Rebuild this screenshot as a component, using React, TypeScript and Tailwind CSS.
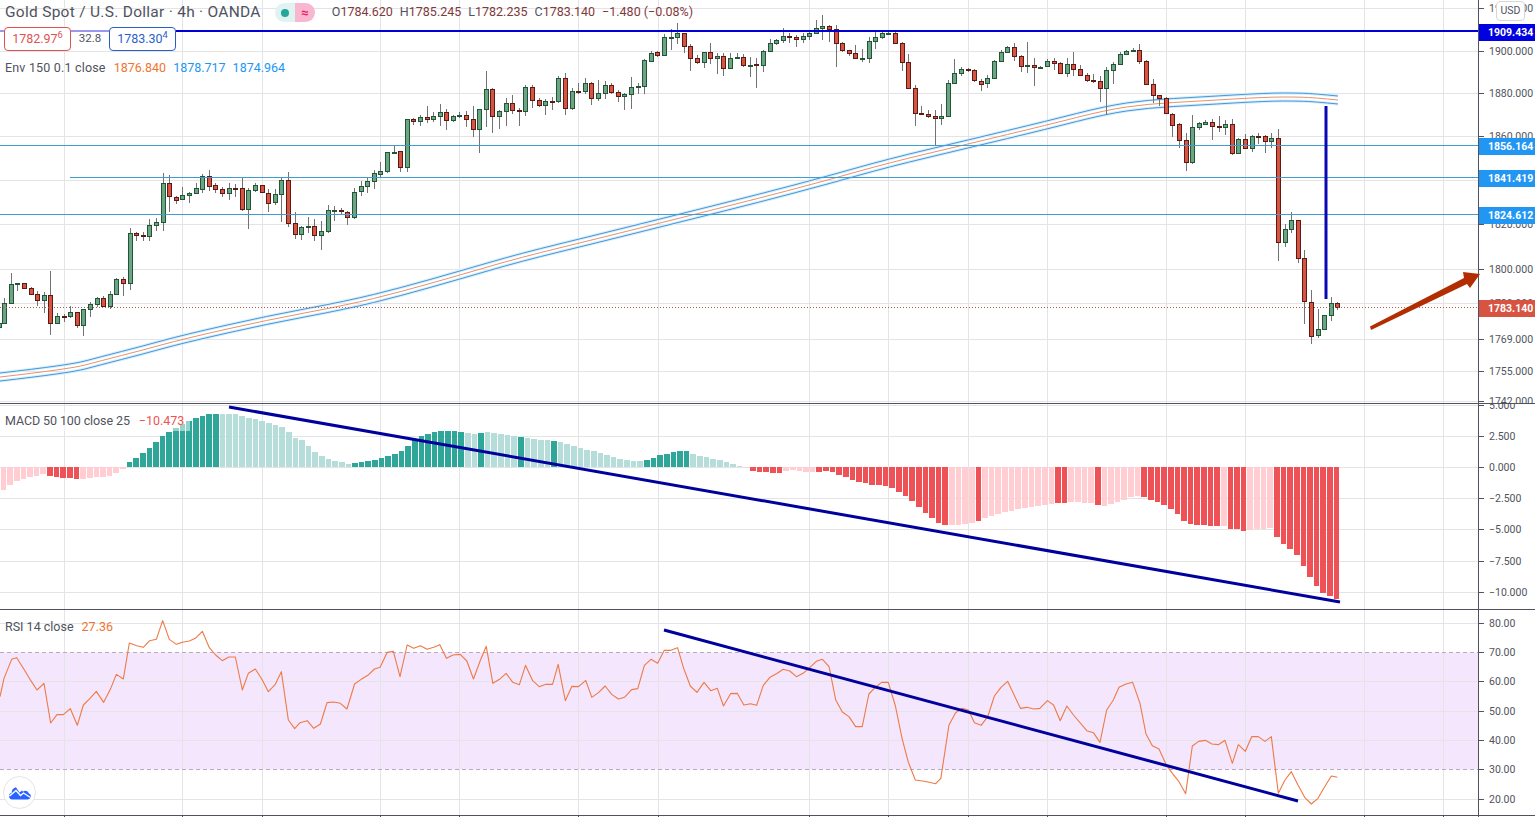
type Row = number[];

// candle rows are [x, wickTop, bodyTop, bodyBottom, wickBottom, up] read off 3x crops
const crop = (ox: number, oy: number, rows: Row[]) =>
  rows.map(([x, wt, bt, bb, wb, up]) => ({
    x: ox + x / 3,
    wt: oy + wt / 3,
    bt: oy + bt / 3,
    bb: oy + bb / 3,
    wb: oy + wb / 3,
    up: up === 1,
  }));

const candles = [
  ...crop(0, 170, [
    [-2, 455, 460, 472, 480, 1], [13, 385, 400, 460, 462, 1], [34, 310, 343, 400, 402, 1], [52, 338, 340, 344, 362, 1],
    [73, 338, 340, 356, 358, 0], [94, 352, 355, 373, 375, 0], [112, 362, 373, 392, 408, 0], [133, 365, 376, 392, 428, 1],
    [151, 303, 376, 460, 494, 0], [172, 430, 439, 460, 462, 1], [193, 432, 438, 440, 455, 0], [211, 408, 427, 439, 445, 1],
    [232, 425, 427, 467, 473, 0], [250, 418, 418, 467, 497, 1], [271, 395, 403, 418, 440, 1], [292, 380, 385, 403, 410, 1],
    [310, 378, 385, 410, 412, 0], [331, 363, 373, 410, 418, 1], [349, 325, 328, 373, 375, 1], [370, 320, 328, 341, 378, 0],
    [391, 175, 190, 341, 360, 1], [409, 186, 190, 197, 212, 0], [430, 185, 195, 199, 212, 0], [448, 148, 166, 199, 212, 1],
    [469, 145, 157, 166, 182, 1], [490, 10, 40, 157, 182, 1], [508, 15, 40, 80, 125, 0], [529, 78, 80, 88, 102, 0],
    [547, 52, 76, 88, 90, 1], [568, 66, 70, 76, 98, 1], [589, 38, 55, 70, 72, 1], [607, 13, 17, 55, 68, 1],
    [628, 0, 17, 46, 62, 0], [646, 40, 46, 58, 70, 0], [667, 52, 58, 70, 80, 0], [688, 40, 55, 70, 90, 1],
    [706, 43, 55, 56, 82, 0], [727, 20, 55, 118, 122, 0], [745, 55, 61, 118, 176, 1], [766, 40, 46, 61, 65, 1],
    [787, 44, 46, 68, 70, 0], [805, 58, 68, 97, 125, 0], [826, 58, 73, 97, 105, 1], [844, 25, 31, 73, 156, 1],
    [865, 7, 31, 160, 170, 0], [886, 127, 160, 193, 208, 0], [904, 168, 172, 193, 210, 1], [925, 142, 169, 172, 190, 1],
    [943, 148, 169, 197, 212, 0], [964, 153, 184, 197, 240, 1], [985, 105, 121, 184, 190, 1], [1003, 108, 121, 122, 152, 1],
    [1024, 115, 121, 125, 135, 0], [1042, 122, 125, 139, 165, 0], [1063, 55, 65, 139, 146, 1], [1084, 33, 49, 65, 78, 1],
    [1102, 25, 34, 49, 68, 1], [1123, 0, 10, 34, 58, 1], [1141, -23, 3, 11, 25, 1], [1162, -55, -53, 5, 8, 1],
    [1183, -73, -55, -53, -50, 1], [1201, -58, -56, -7, 5, 0], [1222, -154, -152, -7, 5, 1],
  ]),
  ...crop(400, 20, [
    [40, 295, 298, 305, 315, 0], [61, 285, 292, 305, 318, 1], [82, 258, 292, 298, 310, 0], [100, 275, 289, 298, 305, 1],
    [121, 252, 277, 290, 318, 1], [139, 267, 277, 302, 330, 0], [160, 285, 289, 302, 305, 1], [178, 277, 286, 289, 295, 1],
    [199, 273, 286, 298, 320, 0], [220, 258, 298, 328, 350, 0], [238, 268, 268, 328, 400, 1], [259, 153, 208, 268, 320, 1],
    [277, 205, 208, 290, 338, 0], [298, 270, 274, 290, 326, 1], [319, 235, 250, 274, 318, 1], [337, 225, 250, 271, 282, 0],
    [358, 265, 271, 274, 318, 0], [376, 195, 202, 274, 288, 1], [397, 195, 202, 241, 265, 0], [418, 235, 241, 256, 262, 0],
    [436, 238, 244, 256, 285, 1], [457, 232, 243, 245, 270, 0], [475, 168, 175, 244, 250, 1], [496, 160, 175, 265, 285, 0],
    [517, 205, 214, 265, 270, 1], [535, 190, 214, 215, 222, 0], [556, 175, 190, 214, 222, 1], [574, 185, 190, 235, 255, 0],
    [595, 180, 220, 235, 242, 1], [616, 183, 196, 220, 237, 1], [634, 190, 196, 218, 222, 0], [655, 210, 217, 230, 245, 0],
    [673, 220, 223, 230, 270, 1], [694, 170, 202, 223, 267, 1], [715, 190, 199, 203, 222, 1], [733, 118, 121, 199, 222, 1],
    [754, 92, 98, 122, 125, 1], [772, 92, 97, 106, 112, 0], [793, 43, 52, 106, 108, 1], [814, 28, 52, 53, 90, 1],
    [832, 10, 40, 52, 72, 1], [853, 40, 40, 80, 98, 0], [871, 72, 79, 116, 152, 0], [892, 105, 115, 128, 132, 0],
    [913, 95, 97, 128, 143, 1], [931, 70, 97, 116, 132, 0], [952, 100, 109, 116, 162, 1], [970, 100, 109, 146, 167, 0],
    [991, 100, 115, 145, 146, 1], [1012, 100, 112, 115, 118, 1], [1030, 103, 112, 137, 140, 0], [1051, 110, 134, 136, 170, 1],
    [1069, 115, 133, 136, 205, 0], [1090, 90, 94, 136, 155, 1], [1111, 57, 70, 94, 97, 1], [1129, 57, 61, 70, 75, 1],
    [1150, 25, 49, 61, 68, 1], [1168, 40, 49, 52, 70, 0], [1189, 45, 52, 58, 80, 0],
  ]),
  ...crop(800, 10, [
    [10, 70, 79, 88, 100, 1], [28, 60, 70, 79, 90, 1], [49, 30, 55, 70, 72, 1], [67, 15, 49, 55, 90, 1],
    [88, 45, 49, 58, 95, 0], [109, 45, 58, 100, 172, 0], [127, 97, 100, 121, 125, 0], [148, 120, 121, 130, 137, 0],
    [166, 105, 130, 145, 147, 0], [187, 117, 144, 146, 155, 1], [208, 80, 94, 145, 158, 1], [226, 65, 82, 94, 118, 1],
    [247, 65, 70, 82, 88, 1], [265, 60, 70, 71, 75, 1], [286, 60, 70, 100, 102, 0], [307, 97, 100, 157, 182, 0],
    [325, 132, 157, 235, 236, 0], [346, 225, 235, 310, 347, 0], [364, 288, 310, 312, 315, 0], [385, 300, 313, 319, 323, 0],
    [406, 300, 319, 325, 405, 0], [424, 283, 319, 325, 345, 1], [445, 210, 220, 320, 322, 1], [463, 147, 190, 220, 222, 1],
    [484, 170, 178, 190, 197, 1], [505, 173, 178, 181, 185, 0], [523, 178, 181, 212, 215, 0], [544, 208, 212, 221, 242, 0],
    [562, 195, 205, 221, 233, 1], [583, 150, 154, 205, 208, 1], [604, 120, 127, 154, 157, 1], [622, 108, 112, 127, 130, 1],
    [643, 100, 112, 139, 152, 0], [664, 135, 139, 169, 187, 0], [682, 96, 166, 169, 190, 1], [703, 145, 166, 172, 227, 0],
    [721, 168, 170, 172, 175, 1], [742, 148, 154, 169, 172, 1], [763, 145, 154, 160, 180, 0], [781, 155, 160, 190, 193, 0],
    [802, 145, 163, 190, 202, 1], [820, 127, 163, 178, 198, 0], [841, 165, 178, 196, 198, 0], [862, 190, 196, 212, 215, 0],
    [880, 192, 211, 214, 218, 0], [901, 198, 214, 235, 275, 0], [919, 170, 181, 235, 315, 1], [940, 155, 163, 181, 222, 1],
    [961, 127, 133, 163, 165, 1], [979, 120, 124, 133, 136, 1], [1000, 115, 121, 124, 127, 1], [1018, 102, 121, 154, 163, 0],
    [1039, 150, 154, 223, 225, 0], [1060, 208, 223, 256, 280, 0], [1078, 256, 256, 265, 288, 0], [1099, 262, 265, 310, 312, 0],
  ]),
  ...crop(1100, 20, [
    [217, 278, 281, 313, 350, 0], [238, 310, 313, 361, 383, 0], [259, 338, 361, 427, 452, 0], [277, 285, 322, 427, 433, 1],
    [298, 307, 310, 322, 330, 1], [316, 300, 306, 312, 315, 1], [337, 297, 307, 320, 360, 0], [358, 288, 319, 322, 335, 0],
    [376, 300, 313, 322, 345, 1], [397, 297, 313, 400, 405, 0], [415, 355, 358, 401, 402, 1], [436, 343, 358, 385, 387, 0],
    [457, 345, 349, 385, 395, 1], [475, 340, 349, 351, 372, 0], [496, 345, 349, 364, 400, 0], [514, 340, 355, 364, 385, 1],
    [535, 327, 355, 666, 723, 0],
  ]),
  ...crop(1200, 200, [
    [256, 72, 88, 127, 140, 1], [274, 37, 61, 88, 100, 1], [295, 60, 61, 176, 188, 0], [313, 150, 175, 305, 372, 0],
    [334, 270, 305, 406, 432, 0], [355, 327, 388, 406, 414, 1], [373, 345, 345, 388, 390, 1], [394, 292, 310, 346, 362, 1],
    [412, 307, 310, 322, 330, 0],
  ]),
];

const envMid = [
  [0, 377], [70, 369], [100, 361], [143, 350], [183, 339], [267, 320], [347, 305], [400, 292], [460, 275], [520, 257.5],
  [600, 238], [680, 218], [760, 198], [828, 180], [888, 163], [968, 144], [1047, 125], [1106, 110], [1147, 104],
  [1200, 101], [1267, 97], [1300, 97], [1317, 98], [1338, 100],
];

const line = (pts: number[][]) => pts.map(([x, y]) => `${x},${y}`).join(" ");

// quadratic through the midpoints, keeps the envelope from kinking at each key point
const smooth = (pts: number[][], dy: number) => {
  let d = `M${pts[0][0]} ${pts[0][1] + dy}`;
  for (let i = 1; i < pts.length - 1; i++) {
    const mx = (pts[i][0] + pts[i + 1][0]) / 2;
    const my = (pts[i][1] + pts[i + 1][1]) / 2 + dy;
    d += ` Q${pts[i][0]} ${pts[i][1] + dy} ${mx} ${my}`;
  }
  const last = pts[pts.length - 1];
  return `${d} L${last[0]} ${last[1] + dy}`;
};

// macd histogram, [x, height] in px from the zero line
const macdKeys = [
  [4, -23], [10.5, -18], [17, -14], [24, -12], [30, -10], [37, -9], [43, -7], [50, -9], [57, -10], [63.5, -11], [70, -11],
  [77, -12], [83, -12], [90, -11], [96, -10], [103, -10], [109, -9], [116, -6], [122, -4], [129, 4], [136, 9], [142, 13],
  [149, 18], [155, 23], [162, 30], [169, 35], [175, 38], [182, 42], [189, 46], [195, 48], [202, 51], [209, 53], [235, 53],
  [242, 51], [248, 49], [255, 48], [261, 46], [268, 44], [275, 42], [281, 41], [288, 36], [294, 30], [301, 28], [310, 20],
  [320, 12], [335, 6], [345, 4], [352, 3], [365, 5], [380, 8], [395, 13], [405, 18], [418, 30], [430, 34], [445, 36],
  [455, 36], [465, 34], [475, 33], [485, 35], [500, 33], [520, 30], [540, 27], [557, 26], [570, 22], [585, 18], [600, 14],
  [620, 8], [638, 5], [650, 8], [665, 13], [680, 16], [686, 16], [700, 11], [715, 8], [730, 4], [742, 1], [748, -2],
  [755, -5], [780, -6], [790, -3], [810, -5], [830, -4], [845, -10], [860, -15], [875, -18], [890, -19], [900, -25],
  [912, -33], [925, -45], [937, -55], [945, -58], [960, -58], [975, -55], [990, -50], [1010, -44], [1030, -40], [1050, -37],
  [1060, -36], [1075, -35], [1090, -36], [1100, -39], [1106, -39], [1112, -37], [1119, -35], [1126, -32], [1132, -30],
  [1139, -29], [1146, -30], [1152, -33], [1159, -35], [1166, -39], [1172, -43], [1179, -48], [1185, -55], [1192, -57],
  [1198, -58], [1205, -58], [1211, -59], [1225, -59], [1231, -62], [1238, -62], [1245, -64], [1251, -63], [1258, -62],
  [1265, -62], [1271, -61], [1278, -71], [1284, -77], [1291, -82], [1298, -89], [1304, -99], [1311, -111], [1318, -120],
  [1324, -126], [1331, -129], [1337, -132],
];
const macdDark = [
  [48, 80], [126, 219], [352, 462], [480, 487], [520, 527], [554, 561], [642, 688], [748, 780], [815, 950], [977, 983],
  [1058, 1066], [1098, 1103], [1143, 1222], [1229, 1247], [1275, 1340],
];

const macdAt = (x: number) => {
  for (let i = 1; i < macdKeys.length; i++) {
    const [x0, h0] = macdKeys[i - 1];
    const [x1, h1] = macdKeys[i];
    if (x <= x1) return h0 + ((h1 - h0) * Math.max(0, x - x0)) / (x1 - x0);
  }
  return -132;
};

const barX = (i: number) => 4 + (1333 / 201) * i;
const macdBars = Array.from({ length: 202 }, (_, i) => {
  const x = barX(i);
  const left = Math.floor(x - 2.8);
  const next = Math.floor(barX(i + 1) - 2.8);
  return { left, width: next - left - 1, h: Math.round(macdAt(x)), dark: macdDark.some(([a, b]) => x >= a && x <= b) };
});

const rsiA = [
  [0, 290], [12, 235], [35, 178], [50, 173], [70, 205], [90, 238], [111, 270], [132, 250], [152, 369], [171, 344], [190, 344],
  [211, 326], [232, 376], [250, 315], [270, 295], [289, 274], [311, 307], [331, 268], [349, 223], [370, 237], [388, 129],
  [410, 137], [430, 142], [449, 122], [469, 118], [488, 62], [508, 118], [529, 133], [547, 127], [568, 123], [586, 115],
  [607, 94], [628, 143], [647, 165], [667, 182], [686, 171], [706, 171], [727, 270], [745, 220], [766, 207], [787, 240],
  [805, 275], [826, 253], [844, 215], [865, 360], [884, 386],
].map(([x, y]) => [x / 3, 600 + y / 3]);
const rsiB = [
  [0, 368], [14, 362], [27, 385], [40, 372], [53, 308], [66, 306], [79, 310], [92, 327], [107, 252], [120, 238], [133, 226],
  [146, 207], [157, 202], [171, 157], [183, 154], [196, 230], [210, 135], [223, 145], [236, 137], [249, 148], [262, 142],
  [274, 134], [287, 175], [300, 165], [314, 163], [327, 183], [340, 237], [353, 183], [365, 139], [378, 250], [391, 238],
  [404, 220], [417, 247], [430, 254], [442, 196], [456, 242], [469, 260], [482, 253], [495, 253], [506, 193], [520, 302],
  [533, 259], [546, 260], [560, 241], [572, 292], [585, 278], [598, 258], [611, 283], [624, 297], [636, 292], [650, 269],
  [662, 266], [675, 196], [688, 178], [701, 190], [714, 151], [727, 151], [740, 143], [752, 205], [765, 258], [778, 277],
  [792, 247], [805, 272], [818, 265], [830, 318], [844, 281], [857, 280], [870, 315], [883, 311], [895, 316], [908, 256],
  [921, 232], [934, 221], [947, 208], [960, 213], [973, 230], [986, 220], [999, 203], [1012, 184], [1024, 178], [1037, 200],
  [1050, 300], [1063, 336], [1076, 350], [1089, 380], [1102, 380], [1115, 282], [1127, 263], [1140, 247], [1153, 247],
  [1167, 318], [1180, 415], [1192, 485], [1206, 540], [1220, 543], [1233, 547], [1246, 551], [1256, 535], [1272, 375],
  [1285, 338], [1298, 325], [1310, 330], [1322, 368], [1335, 376], [1348, 350], [1361, 288], [1374, 262], [1387, 244],
  [1412, 325], [1425, 322], [1438, 327], [1450, 325], [1465, 302], [1477, 315], [1490, 362], [1503, 318], [1516, 345],
  [1542, 392], [1555, 398],
].map(([x, y]) => [300 + x / 1.96, 600 + y / 3]);
const rsiC = [
  [0, 397], [20, 300], [40, 270], [57, 232], [78, 222], [98, 217], [120, 280], [138, 372], [157, 407], [177, 417], [198, 463],
  [217, 490], [237, 515], [257, 551], [277, 408], [296, 394], [316, 391], [336, 402], [355, 404], [375, 391], [397, 460],
  [415, 404], [436, 424], [455, 380], [475, 380], [495, 394], [514, 380], [535, 550], [555, 510], [574, 485], [594, 525],
  [614, 562], [634, 582], [654, 565], [674, 530], [694, 498], [712, 502],
].map(([x, y]) => [1100 + x / 3, 610 + y / 3]);
const rsi = [...rsiA, ...rsiB, ...rsiC];

const verticals = [64, 182, 262, 380, 459, 578, 658, 809, 888, 968, 1047, 1166, 1245, 1364, 1443];

const priceTicks: [number, string][] = [
  [8, "1920.000"], [51, "1900.000"], [93, "1880.000"], [136, "1860.000"], [224, "1820.000"], [269, "1800.000"],
  [303, "1780.000"], [339, "1769.000"], [371, "1755.000"], [401, "1742.000"],
];
const priceGrid = [8, 51, 93, 136, 180, 224, 269, 303, 339, 371, 401];
const macdTicks: [number, string][] = [
  [405, "5.000"], [436, "2.500"], [467, "0.000"], [498, "−2.500"], [529, "−5.000"], [561, "−7.500"], [592, "−10.000"],
];
const rsiTicks: [number, string][] = [
  [623, "80.00"], [652, "70.00"], [681, "60.00"], [711, "50.00"], [740, "40.00"], [769, "30.00"], [799, "20.00"],
];

const Grid = ({ ys, top, h }: { ys: number[]; top: number; h: number }) => (
  <g stroke="#e4e4e6" strokeWidth="1" shapeRendering="crispEdges">
    {ys.map((y) => (
      <line key={y} x1="0" x2="1478" y1={y + 0.5} y2={y + 0.5} />
    ))}
    {verticals.map((x) => (
      <line key={x} x1={x + 0.5} x2={x + 0.5} y1={top} y2={top + h} />
    ))}
  </g>
);

const Axis = ({ top, ticks, children }: { top: number; ticks: [number, string][]; children?: React.ReactNode }) => (
  <div className="relative w-[57px] overflow-hidden border-l border-[#50535e] text-[10.5px] text-[#50535e]">
    {ticks.map(([y, label]) => (
      <div key={label} className="absolute left-0 flex h-[14px] items-center" style={{ top: y - top - 6.5 }}>
        <span className="mr-[5px] h-px w-[5px] bg-[#50535e]" />
        <span>{label}</span>
      </div>
    ))}
    {children}
  </div>
);

const PriceTag = ({ y, label, color }: { y: number; label: string; color: string }) => (
  <div
    className={`absolute left-0 flex h-[17px] w-[57px] items-center pl-[9px] pt-px text-[10.5px] font-bold text-white ${color}`}
    style={{ top: y - 8 }}
  >
    {label}
  </div>
);

export default function App() {
  return (
    <div
      className="relative h-[817px] w-[1535px] overflow-hidden bg-white"
      style={{ fontFamily: '"Roboto", "Liberation Sans", sans-serif' }}
    >
      {/* Price pane */}
      <section className="relative flex h-[404px] border-b border-[#50535e]">
        <svg className="h-[403px] w-[1478px] shrink-0" viewBox="0 0 1478 403">
          <Grid ys={priceGrid} top={0} h={403} />
          <path d={smooth(envMid, -4)} fill="none" stroke="#d8eefc" strokeWidth="3" />
          <path d={smooth(envMid, 4)} fill="none" stroke="#d8eefc" strokeWidth="3" />
          <path d={smooth(envMid, -4)} fill="none" stroke="#4598d8" strokeWidth="1" />
          <path d={smooth(envMid, 4)} fill="none" stroke="#4598d8" strokeWidth="1" />
          <path d={smooth(envMid, 0)} fill="none" stroke="#e6926a" strokeWidth="1" />
          {candles.map((c, i) => {
            const cx = Math.round(c.x) + 0.5;
            return (
              <g key={i} shapeRendering="crispEdges">
                <line x1={cx} x2={cx} y1={c.wt} y2={c.wb} stroke="#737375" />
                <rect
                  x={cx - 2}
                  y={Math.round(c.bt) + 0.5}
                  width="4"
                  height={Math.max(1, Math.round(c.bb - c.bt))}
                  fill={c.up ? "#6ba583" : "#d75442"}
                  stroke={c.up ? "#225437" : "#5b1a13"}
                />
              </g>
            );
          })}
          <line x1="0" x2="1478" y1="307.5" y2="307.5" stroke="#b5594c" strokeDasharray="1 2" />
          <g stroke="#3f9bd0" strokeWidth="1" shapeRendering="crispEdges">
            <line x1="0" x2="1478" y1="145.5" y2="145.5" />
            <line x1="70" x2="1478" y1="177.5" y2="177.5" />
            <line x1="0" x2="1478" y1="214.5" y2="214.5" />
          </g>
          <line x1="0" x2="1478" y1="31" y2="31" stroke="#0000d6" strokeWidth="2" shapeRendering="crispEdges" />
          <line x1="1326" x2="1326" y1="106" y2="299" stroke="#0808b4" strokeWidth="3" />
        </svg>
        <Axis top={0} ticks={priceTicks}>
          <PriceTag y={31.5} label="1909.434" color="bg-[#0000e0]" />
          <PriceTag y={145.5} label="1856.164" color="bg-[#2196f3]" />
          <PriceTag y={177.5} label="1841.419" color="bg-[#2196f3]" />
          <PriceTag y={214.5} label="1824.612" color="bg-[#2196f3]" />
          <PriceTag y={307.5} label="1783.140" color="bg-[#d75442]" />
        </Axis>
        <div className="absolute left-[1496px] top-[1px] flex h-[20px] w-[29px] items-center justify-center rounded-[4px] border border-[#d6d6d6] bg-white text-[10.5px] text-[#50535e]">
          USD
        </div>

        {/* Legend */}
        <div className="absolute left-0 top-0 flex flex-col items-start text-[#50535e]">
          <div className="flex h-[24px] items-center pl-[5px] pt-px">
            <span className="text-[15.5px] tracking-[0.28px]">Gold Spot / U.S. Dollar · 4h · OANDA</span>
            <div className="ml-[14px] flex h-[19px] w-[40px] overflow-hidden rounded-full">
              <div className="flex w-[20px] items-center justify-center bg-[#dff3f0]">
                <span className="h-[8px] w-[8px] rounded-full bg-[#26a69a]" />
              </div>
              <div className="flex flex-1 items-center justify-center bg-[#f8b6cf] text-[13px] font-bold text-[#e91e63]">≈</div>
            </div>
            <div className="ml-[17px] flex gap-[7px] text-[12.5px] text-[#7f3a3a]">
              <span><span className="text-[#50535e]">O</span>1784.620</span>
              <span><span className="text-[#50535e]">H</span>1785.245</span>
              <span><span className="text-[#50535e]">L</span>1782.235</span>
              <span><span className="text-[#50535e]">C</span>1783.140</span>
              <span>−1.480 (−0.08%)</span>
            </div>
          </div>
          <div className="mt-[3px] flex h-[24px] items-center bg-white/60 pl-[4px] text-[12.5px]">
            <div className="flex h-[24px] w-[67px] items-center justify-center rounded-[4px] border border-[#e05252] bg-white text-[#e05252]">
              <span>1782.97<sup>6</sup></span>
            </div>
            <span className="w-[38px] text-center text-[11.5px]">32.8</span>
            <div className="flex h-[24px] w-[67px] items-center justify-center rounded-[4px] border border-[#2b5fc7] bg-white text-[#2b5fc7]">
              <span>1783.30<sup>4</sup></span>
            </div>
          </div>
          <div className="mt-[8px] flex items-center gap-[7px] pl-[5px] text-[12.5px]">
            <span className="mr-px tracking-[0.18px]">Env 150 0.1 close</span>
            <span className="text-[#f07430]">1876.840</span>
            <span className="text-[#2196f3]">1878.717</span>
            <span className="text-[#2196f3]">1874.964</span>
          </div>
        </div>
      </section>

      {/* MACD pane */}
      <section className="relative flex h-[206px] border-b border-[#50535e]">
        <svg className="h-[205px] w-[1478px] shrink-0" viewBox="0 404 1478 205">
          <Grid ys={macdTicks.map(([y]) => y)} top={404} h={205} />
          <g shapeRendering="crispEdges">
            {macdBars.map((b, i) => (
              <rect
                key={i}
                x={b.left}
                y={b.h > 0 ? 467 - b.h : 467}
                width={b.width}
                height={Math.abs(b.h)}
                fill={b.h > 0 ? (b.dark ? "#2ea69a" : "#b5dedb") : b.dark ? "#ee5257" : "#ffcdd2"}
              />
            ))}
          </g>
        </svg>
        <Axis top={404} ticks={macdTicks} />
        <div className="absolute left-0 top-[8px] flex h-[19px] items-center gap-[9px] bg-white/50 pl-[5px] pr-[6px] text-[12.5px] text-[#50535e]">
          <span className="tracking-[-0.1px]">MACD 50 100 close 25</span>
          <span className="text-[#ef5350]">−10.473</span>
        </div>
      </section>

      {/* RSI pane */}
      <section className="relative flex h-[206px] border-b border-[#50535e]">
        <svg className="h-[205px] w-[1478px] shrink-0" viewBox="0 610 1478 205">
          <rect x="0" y="652.5" width="1478" height="117" fill="#f4e6fc" />
          <Grid ys={[623, 681, 711, 740, 799]} top={610} h={205} />
          <g stroke="#b7abbd" strokeDasharray="4 3" shapeRendering="crispEdges">
            <line x1="0" x2="1478" y1="652.5" y2="652.5" />
            <line x1="0" x2="1478" y1="769.5" y2="769.5" />
          </g>
          <polyline points={line(rsi)} fill="none" stroke="#ee7a45" strokeWidth="1.1" strokeLinejoin="round" />
        </svg>
        <Axis top={610} ticks={rsiTicks} />
        <div className="absolute left-[5px] top-[8px] flex items-center gap-[8px] text-[12.5px] text-[#50535e]">
          <span>RSI 14 close</span>
          <span className="text-[#f07430]">27.36</span>
        </div>
        {/* TradingView badge */}
        <div className="absolute left-[3px] top-[166px] flex h-[33px] w-[33px] items-center justify-center rounded-full border border-[#e4e4e6] bg-white">
          <svg width="22" height="14" viewBox="0 0 22 14">
            <path d="M3 13.5H18.5A3.2 3.2 0 0 0 20 7.4A4 4 0 0 0 15 5L14 5.8L13 4.5L10.5 6.5L7 1.2A5 5 0 0 0 2.8 6.8A3.4 3.4 0 0 0 3 13.5Z" fill="#2962ff" />
            <path d="M0.5 10L7 4.5L11.5 9.5L14.5 7L21.5 11.5" fill="none" stroke="#fff" strokeWidth="1.4" />
          </svg>
        </div>
      </section>

      {/* Hand drawn trend lines and the arrow sit over everything */}
      <svg className="pointer-events-none absolute left-0 top-0 h-[817px] w-[1535px]" viewBox="0 0 1535 817">
        <line x1="229" y1="407" x2="1340" y2="602" stroke="#00009c" strokeWidth="3" />
        <line x1="664" y1="630" x2="1298" y2="801" stroke="#00009c" strokeWidth="3" />
        <polygon points="1370,326.5 1464,278 1463,272 1480,274 1470,288 1467,284 1371,330" fill="#b22e00" />
        <g stroke="#50535e">
          {verticals.map((x) => (
            <line key={x} x1={x + 0.5} x2={x + 0.5} y1="815" y2="817" />
          ))}
          <line x1="1478.5" x2="1478.5" y1="815" y2="817" />
        </g>
      </svg>
    </div>
  );
}
